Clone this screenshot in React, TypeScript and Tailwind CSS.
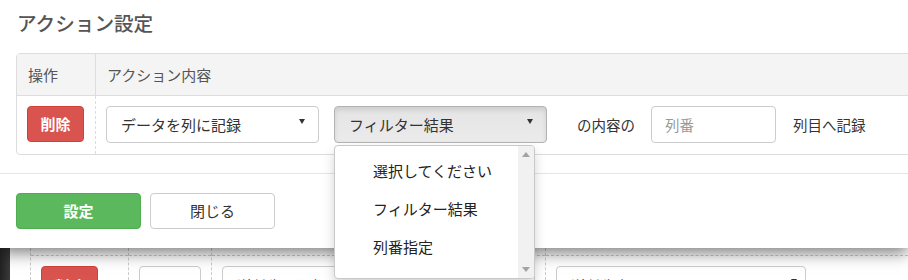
import type { FC } from 'react';

const Caret: FC<{ className?: string }> = ({ className = '' }) => (
  <span
    className={`block w-0 h-0 border-x-[3px] border-x-transparent border-t-[5px] border-t-[#333] ${className}`}
  />
);

const SelectBox: FC<{ label: string; active?: boolean; width: string }> = ({ label, active, width }) => (
  <div
    className={`relative flex items-center h-[37px] ${width} rounded-[4px] border pl-[14px] text-[15px] text-[#333] ${
      active
        ? 'border-[#b3b3b3] bg-gradient-to-b from-[#e4e4e4] to-[#ebebeb] shadow-[inset_0_3px_5px_rgba(0,0,0,0.1)]'
        : 'border-[#ccc] bg-white'
    }`}
  >
    <span className="leading-[20px]">{label}</span>
    <Caret className="absolute right-[13px] top-[12px]" />
  </div>
);

const DropdownList: FC = () => {
  const items = ['選択してください', 'フィルター結果', '列番指定'];
  return (
    <div className="absolute z-20 left-[334px] top-[145px] w-[201px] h-[134px] bg-white border border-[#c8c8c8] rounded-[4px] shadow-[0_6px_12px_rgba(0,0,0,0.175)] overflow-hidden flex">
      <ul className="flex-1 pt-[6px]">
        {items.map((item) => (
          <li key={item} className="h-[38px] flex items-center pl-[38px] text-[15px] text-[#222] leading-[20px]">
            {item}
          </li>
        ))}
      </ul>
      <div className="w-[16px] bg-[#f1f1f1] flex flex-col items-center justify-between py-[6px]">
        <span className="block w-0 h-0 border-x-[4px] border-x-transparent border-b-[5px] border-b-[#a3a3a3]" />
        <span className="block w-0 h-0 border-x-[4px] border-x-transparent border-t-[5px] border-t-[#a3a3a3]" />
      </div>
    </div>
  );
};

const ActionModal: FC = () => (
  <div className="relative z-10 w-[908px] h-[248px] bg-white shadow-[0_5px_15px_rgba(0,0,0,0.5)] flex flex-col">
    <div className="pt-[11px] pl-[17px] h-[53px]">
      <h4 className="text-[19.6px] leading-[24px] font-medium text-[#555]">アクション設定</h4>
    </div>
    <div className="ml-4 w-[900px] border border-[#ddd] rounded-[4px] text-[15px]">
      <div className="flex h-[42px] bg-[#f4f4f4] border-b border-[#ddd] text-[#555]">
        <div className="w-[79px] border-r border-[#ddd] pl-[11px] flex items-center leading-[20px]">操作</div>
        <div className="flex-1 pl-[11px] flex items-center leading-[20px]">アクション内容</div>
      </div>
      <div className="flex h-[58px]">
        <div className="w-[79px] border-r border-dashed border-[#ddd] pl-[10px] pt-[10px]">
          <button className="w-[57px] h-[36px] rounded-[4px] bg-[#d9534f] border border-[#d43f3a] text-white font-bold text-[15px] leading-[20px]">
            削除
          </button>
        </div>
        <div className="flex-1 pl-[10px] pt-[10px] flex items-start text-[14.5px]">
          <SelectBox label="データを列に記録" width="w-[213px]" />
          <div className="ml-[15px]">
            <SelectBox label="フィルター結果" width="w-[213px]" active />
          </div>
          <span className="ml-[30px] h-[37px] flex items-center text-[#333] leading-[20px]">の内容の</span>
          <div className="ml-[16px] w-[125px] h-[37px] rounded-[4px] border border-[#ccc] bg-white pl-[13px] flex items-center text-[#999] leading-[20px]">
            列番
          </div>
          <span className="ml-[17px] h-[37px] flex items-center text-[#333] leading-[20px]">列目へ記録</span>
        </div>
      </div>
    </div>
    <div className="mt-[18px] border-t border-[#e5e5e5]" />
    <div className="flex gap-[9px] pl-4 pt-[19px] text-[15px]">
      <button className="w-[125px] h-[36px] rounded-[4px] bg-[#5cb85c] border border-[#4cae4c] text-white font-bold leading-[20px]">
        設定
      </button>
      <button className="w-[125px] h-[36px] rounded-[4px] bg-white border border-[#ccc] text-[#333] leading-[20px]">
        閉じる
      </button>
    </div>
  </div>
);

const BackgroundRow: FC = () => (
  <div className="flex h-[32px] overflow-hidden">
    <div className="w-[10px] bg-gradient-to-r from-[#222] to-[#3a3a3a]" />
    <div className="flex-1 flex bg-white pl-[20px]">
      <div className="w-[98px] border-l border-dashed border-[#ccc]">
        <div className="h-[7px]" />
        <div className="border-t border-dashed border-[#ccc] pl-[10px] pt-[10px]">
          <div className="w-[57px] h-[36px] rounded-[4px] bg-[#d9534f] border border-[#d43f3a] text-white font-bold text-[15px] text-center pt-[8px]">
            削除
          </div>
        </div>
      </div>
      <div className="w-[83px] border-l border-dashed border-[#ccc]">
        <div className="h-[7px]" />
        <div className="border-t border-dashed border-[#ccc] pl-[10px] pt-[10px]">
          <div className="w-[62px] h-[36px] rounded-[4px] border border-[#ccc] bg-white" />
        </div>
      </div>
      <div className="w-[334px] border-l border-dashed border-[#ccc]">
        <div className="h-[7px]" />
        <div className="border-t border-dashed border-[#ccc] pl-[10px] pt-[10px]">
          <div className="w-[313px] h-[36px] rounded-[4px] border border-[#ccc] bg-white pl-[14px] pt-[9px] text-[15px] leading-[20px] text-[#333]">
            送付先を選択
          </div>
        </div>
      </div>
      <div className="flex-1 border-l border-dashed border-[#ccc]">
        <div className="h-[7px]" />
        <div className="border-t border-dashed border-[#ccc] pl-[10px] pt-[10px]">
          <div className="relative w-[250px] h-[36px] rounded-[4px] border border-[#ccc] bg-white pl-[14px] pt-[9px] text-[15px] leading-[20px] text-[#333]">
            送付先名
            <Caret className="absolute right-[8px] top-[12px]" />
          </div>
        </div>
      </div>
    </div>
  </div>
);

export default function App() {
  return (
    <div className="relative w-[908px] h-[280px] overflow-hidden bg-white font-['Noto_Sans_CJK_JP','Noto_Sans',sans-serif]">
      <ActionModal />
      <BackgroundRow />
      <DropdownList />
    </div>
  );
}
